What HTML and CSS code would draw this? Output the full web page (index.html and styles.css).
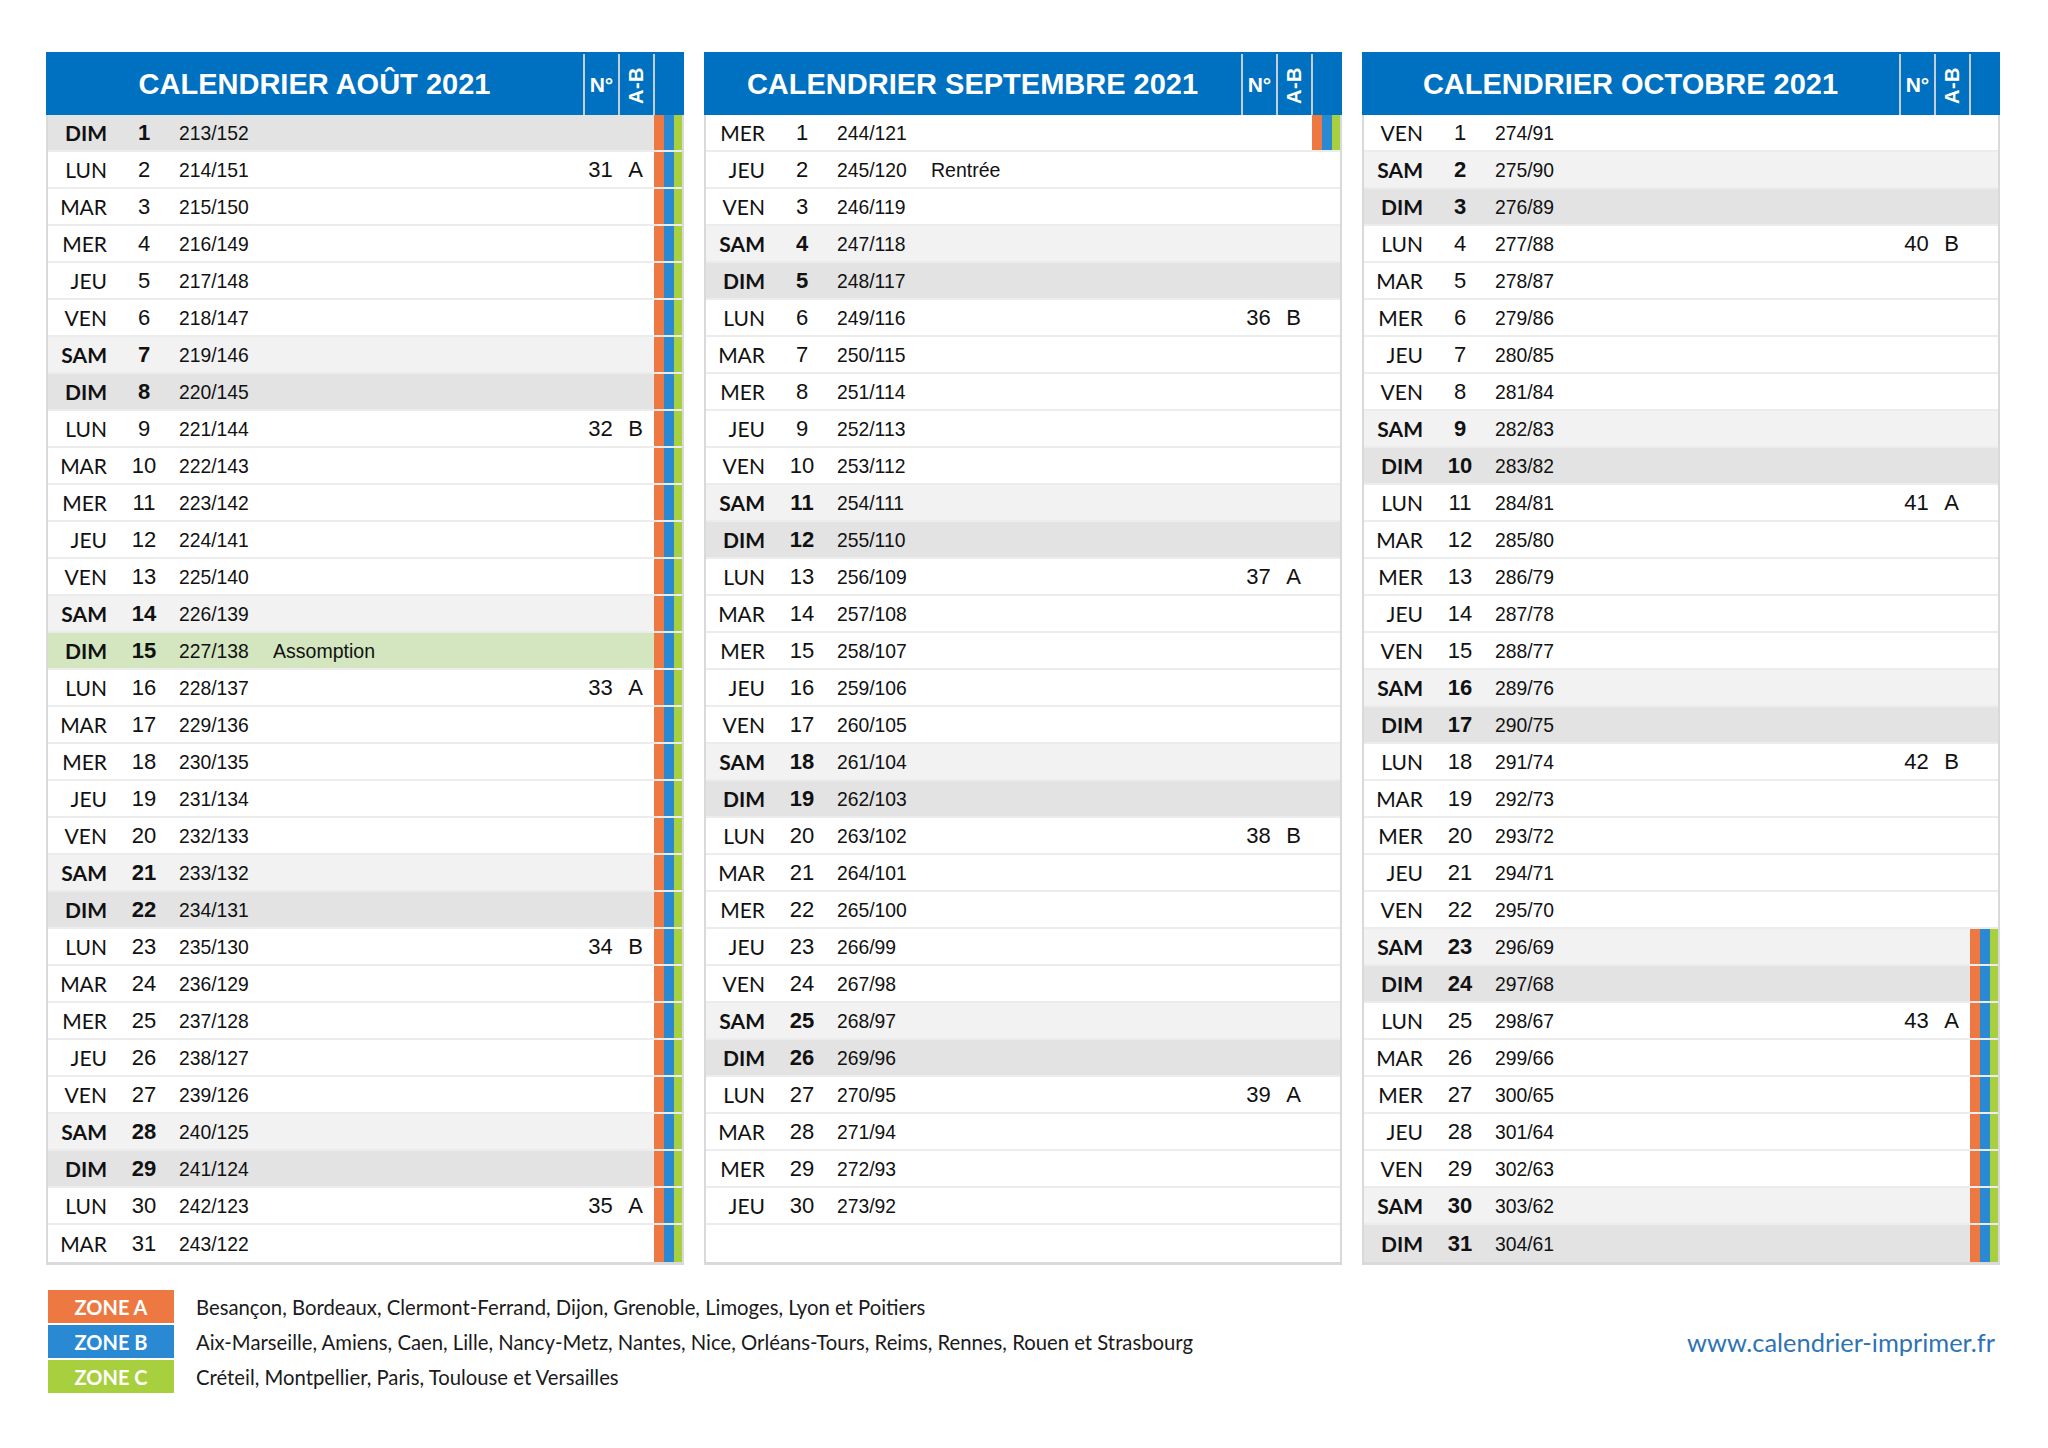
FILE: index.html
```html
<!DOCTYPE html>
<html lang="fr">
<head>
<meta charset="utf-8">
<title>Calendrier août – octobre 2021</title>
<link rel="stylesheet" href="styles.css">
</head>
<body>
<div class="page">
  <div class="months">
    <section class="month">
      <div class="head"><div class="title">CALENDRIER AOÛT 2021</div><div class="hn">N°</div><div class="hab"><span>A-B</span></div><div class="hs"></div></div>
      <div class="body">
        <div class="row dim v"><span class="d">DIM</span><span class="n">1</span><span class="y">213/152</span><span class="s"></span></div>
        <div class="row v"><span class="d">LUN</span><span class="n">2</span><span class="y">214/151</span><span class="w">31</span><span class="z">A</span><span class="s"></span></div>
        <div class="row v"><span class="d">MAR</span><span class="n">3</span><span class="y">215/150</span><span class="s"></span></div>
        <div class="row v"><span class="d">MER</span><span class="n">4</span><span class="y">216/149</span><span class="s"></span></div>
        <div class="row v"><span class="d">JEU</span><span class="n">5</span><span class="y">217/148</span><span class="s"></span></div>
        <div class="row v"><span class="d">VEN</span><span class="n">6</span><span class="y">218/147</span><span class="s"></span></div>
        <div class="row sam v"><span class="d">SAM</span><span class="n">7</span><span class="y">219/146</span><span class="s"></span></div>
        <div class="row dim v"><span class="d">DIM</span><span class="n">8</span><span class="y">220/145</span><span class="s"></span></div>
        <div class="row v"><span class="d">LUN</span><span class="n">9</span><span class="y">221/144</span><span class="w">32</span><span class="z">B</span><span class="s"></span></div>
        <div class="row v"><span class="d">MAR</span><span class="n">10</span><span class="y">222/143</span><span class="s"></span></div>
        <div class="row v"><span class="d">MER</span><span class="n">11</span><span class="y">223/142</span><span class="s"></span></div>
        <div class="row v"><span class="d">JEU</span><span class="n">12</span><span class="y">224/141</span><span class="s"></span></div>
        <div class="row v"><span class="d">VEN</span><span class="n">13</span><span class="y">225/140</span><span class="s"></span></div>
        <div class="row sam v"><span class="d">SAM</span><span class="n">14</span><span class="y">226/139</span><span class="s"></span></div>
        <div class="row dim fer v"><span class="d">DIM</span><span class="n">15</span><span class="y">227/138</span><span class="h">Assomption</span><span class="s"></span></div>
        <div class="row v"><span class="d">LUN</span><span class="n">16</span><span class="y">228/137</span><span class="w">33</span><span class="z">A</span><span class="s"></span></div>
        <div class="row v"><span class="d">MAR</span><span class="n">17</span><span class="y">229/136</span><span class="s"></span></div>
        <div class="row v"><span class="d">MER</span><span class="n">18</span><span class="y">230/135</span><span class="s"></span></div>
        <div class="row v"><span class="d">JEU</span><span class="n">19</span><span class="y">231/134</span><span class="s"></span></div>
        <div class="row v"><span class="d">VEN</span><span class="n">20</span><span class="y">232/133</span><span class="s"></span></div>
        <div class="row sam v"><span class="d">SAM</span><span class="n">21</span><span class="y">233/132</span><span class="s"></span></div>
        <div class="row dim v"><span class="d">DIM</span><span class="n">22</span><span class="y">234/131</span><span class="s"></span></div>
        <div class="row v"><span class="d">LUN</span><span class="n">23</span><span class="y">235/130</span><span class="w">34</span><span class="z">B</span><span class="s"></span></div>
        <div class="row v"><span class="d">MAR</span><span class="n">24</span><span class="y">236/129</span><span class="s"></span></div>
        <div class="row v"><span class="d">MER</span><span class="n">25</span><span class="y">237/128</span><span class="s"></span></div>
        <div class="row v"><span class="d">JEU</span><span class="n">26</span><span class="y">238/127</span><span class="s"></span></div>
        <div class="row v"><span class="d">VEN</span><span class="n">27</span><span class="y">239/126</span><span class="s"></span></div>
        <div class="row sam v"><span class="d">SAM</span><span class="n">28</span><span class="y">240/125</span><span class="s"></span></div>
        <div class="row dim v"><span class="d">DIM</span><span class="n">29</span><span class="y">241/124</span><span class="s"></span></div>
        <div class="row v"><span class="d">LUN</span><span class="n">30</span><span class="y">242/123</span><span class="w">35</span><span class="z">A</span><span class="s"></span></div>
        <div class="row v"><span class="d">MAR</span><span class="n">31</span><span class="y">243/122</span><span class="s"></span></div>
      </div>
    </section>

    <section class="month">
      <div class="head"><div class="title">CALENDRIER SEPTEMBRE 2021</div><div class="hn">N°</div><div class="hab"><span>A-B</span></div><div class="hs"></div></div>
      <div class="body">
        <div class="row v"><span class="d">MER</span><span class="n">1</span><span class="y">244/121</span><span class="s"></span></div>
        <div class="row"><span class="d">JEU</span><span class="n">2</span><span class="y">245/120</span><span class="h">Rentrée</span></div>
        <div class="row"><span class="d">VEN</span><span class="n">3</span><span class="y">246/119</span></div>
        <div class="row sam"><span class="d">SAM</span><span class="n">4</span><span class="y">247/118</span></div>
        <div class="row dim"><span class="d">DIM</span><span class="n">5</span><span class="y">248/117</span></div>
        <div class="row"><span class="d">LUN</span><span class="n">6</span><span class="y">249/116</span><span class="w">36</span><span class="z">B</span></div>
        <div class="row"><span class="d">MAR</span><span class="n">7</span><span class="y">250/115</span></div>
        <div class="row"><span class="d">MER</span><span class="n">8</span><span class="y">251/114</span></div>
        <div class="row"><span class="d">JEU</span><span class="n">9</span><span class="y">252/113</span></div>
        <div class="row"><span class="d">VEN</span><span class="n">10</span><span class="y">253/112</span></div>
        <div class="row sam"><span class="d">SAM</span><span class="n">11</span><span class="y">254/111</span></div>
        <div class="row dim"><span class="d">DIM</span><span class="n">12</span><span class="y">255/110</span></div>
        <div class="row"><span class="d">LUN</span><span class="n">13</span><span class="y">256/109</span><span class="w">37</span><span class="z">A</span></div>
        <div class="row"><span class="d">MAR</span><span class="n">14</span><span class="y">257/108</span></div>
        <div class="row"><span class="d">MER</span><span class="n">15</span><span class="y">258/107</span></div>
        <div class="row"><span class="d">JEU</span><span class="n">16</span><span class="y">259/106</span></div>
        <div class="row"><span class="d">VEN</span><span class="n">17</span><span class="y">260/105</span></div>
        <div class="row sam"><span class="d">SAM</span><span class="n">18</span><span class="y">261/104</span></div>
        <div class="row dim"><span class="d">DIM</span><span class="n">19</span><span class="y">262/103</span></div>
        <div class="row"><span class="d">LUN</span><span class="n">20</span><span class="y">263/102</span><span class="w">38</span><span class="z">B</span></div>
        <div class="row"><span class="d">MAR</span><span class="n">21</span><span class="y">264/101</span></div>
        <div class="row"><span class="d">MER</span><span class="n">22</span><span class="y">265/100</span></div>
        <div class="row"><span class="d">JEU</span><span class="n">23</span><span class="y">266/99</span></div>
        <div class="row"><span class="d">VEN</span><span class="n">24</span><span class="y">267/98</span></div>
        <div class="row sam"><span class="d">SAM</span><span class="n">25</span><span class="y">268/97</span></div>
        <div class="row dim"><span class="d">DIM</span><span class="n">26</span><span class="y">269/96</span></div>
        <div class="row"><span class="d">LUN</span><span class="n">27</span><span class="y">270/95</span><span class="w">39</span><span class="z">A</span></div>
        <div class="row"><span class="d">MAR</span><span class="n">28</span><span class="y">271/94</span></div>
        <div class="row"><span class="d">MER</span><span class="n">29</span><span class="y">272/93</span></div>
        <div class="row"><span class="d">JEU</span><span class="n">30</span><span class="y">273/92</span></div>
        <div class="row"></div>
      </div>
    </section>

    <section class="month">
      <div class="head"><div class="title">CALENDRIER OCTOBRE 2021</div><div class="hn">N°</div><div class="hab"><span>A-B</span></div><div class="hs"></div></div>
      <div class="body">
        <div class="row"><span class="d">VEN</span><span class="n">1</span><span class="y">274/91</span></div>
        <div class="row sam"><span class="d">SAM</span><span class="n">2</span><span class="y">275/90</span></div>
        <div class="row dim"><span class="d">DIM</span><span class="n">3</span><span class="y">276/89</span></div>
        <div class="row"><span class="d">LUN</span><span class="n">4</span><span class="y">277/88</span><span class="w">40</span><span class="z">B</span></div>
        <div class="row"><span class="d">MAR</span><span class="n">5</span><span class="y">278/87</span></div>
        <div class="row"><span class="d">MER</span><span class="n">6</span><span class="y">279/86</span></div>
        <div class="row"><span class="d">JEU</span><span class="n">7</span><span class="y">280/85</span></div>
        <div class="row"><span class="d">VEN</span><span class="n">8</span><span class="y">281/84</span></div>
        <div class="row sam"><span class="d">SAM</span><span class="n">9</span><span class="y">282/83</span></div>
        <div class="row dim"><span class="d">DIM</span><span class="n">10</span><span class="y">283/82</span></div>
        <div class="row"><span class="d">LUN</span><span class="n">11</span><span class="y">284/81</span><span class="w">41</span><span class="z">A</span></div>
        <div class="row"><span class="d">MAR</span><span class="n">12</span><span class="y">285/80</span></div>
        <div class="row"><span class="d">MER</span><span class="n">13</span><span class="y">286/79</span></div>
        <div class="row"><span class="d">JEU</span><span class="n">14</span><span class="y">287/78</span></div>
        <div class="row"><span class="d">VEN</span><span class="n">15</span><span class="y">288/77</span></div>
        <div class="row sam"><span class="d">SAM</span><span class="n">16</span><span class="y">289/76</span></div>
        <div class="row dim"><span class="d">DIM</span><span class="n">17</span><span class="y">290/75</span></div>
        <div class="row"><span class="d">LUN</span><span class="n">18</span><span class="y">291/74</span><span class="w">42</span><span class="z">B</span></div>
        <div class="row"><span class="d">MAR</span><span class="n">19</span><span class="y">292/73</span></div>
        <div class="row"><span class="d">MER</span><span class="n">20</span><span class="y">293/72</span></div>
        <div class="row"><span class="d">JEU</span><span class="n">21</span><span class="y">294/71</span></div>
        <div class="row"><span class="d">VEN</span><span class="n">22</span><span class="y">295/70</span></div>
        <div class="row sam v"><span class="d">SAM</span><span class="n">23</span><span class="y">296/69</span><span class="s"></span></div>
        <div class="row dim v"><span class="d">DIM</span><span class="n">24</span><span class="y">297/68</span><span class="s"></span></div>
        <div class="row v"><span class="d">LUN</span><span class="n">25</span><span class="y">298/67</span><span class="w">43</span><span class="z">A</span><span class="s"></span></div>
        <div class="row v"><span class="d">MAR</span><span class="n">26</span><span class="y">299/66</span><span class="s"></span></div>
        <div class="row v"><span class="d">MER</span><span class="n">27</span><span class="y">300/65</span><span class="s"></span></div>
        <div class="row v"><span class="d">JEU</span><span class="n">28</span><span class="y">301/64</span><span class="s"></span></div>
        <div class="row v"><span class="d">VEN</span><span class="n">29</span><span class="y">302/63</span><span class="s"></span></div>
        <div class="row sam v"><span class="d">SAM</span><span class="n">30</span><span class="y">303/62</span><span class="s"></span></div>
        <div class="row dim v"><span class="d">DIM</span><span class="n">31</span><span class="y">304/61</span><span class="s"></span></div>
      </div>
    </section>
  </div>

  <footer class="legend">
    <div class="zones">
      <div class="zone"><span class="tag za">ZONE A</span><span class="cities">Besançon, Bordeaux, Clermont-Ferrand, Dijon, Grenoble, Limoges, Lyon et Poitiers</span></div>
      <div class="zone"><span class="tag zb">ZONE B</span><span class="cities">Aix-Marseille, Amiens, Caen, Lille, Nancy-Metz, Nantes, Nice, Orléans-Tours, Reims, Rennes, Rouen et Strasbourg</span></div>
      <div class="zone"><span class="tag zc">ZONE C</span><span class="cities">Créteil, Montpellier, Paris, Toulouse et Versailles</span></div>
    </div>
    <div class="url">www.calendrier-imprimer.fr</div>
  </footer>
</div>
</body>
</html>
```

FILE: styles.css
```css
html, body {
  margin: 0;
  padding: 0;
  background: #ffffff;
}

.page {
  width: 2048px;
  padding: 52px 0 0 46px;
  box-sizing: border-box;
  color: #111111;
}

.months {
  display: flex;
  gap: 20px;
}

.month {
  width: 638px;
}

/* ---------- header ---------- */
.head {
  display: grid;
  grid-template-columns: 537px 35px 35px 31px;
  height: 63px;
  background: #0070c0;
  color: #ffffff;
  font-family: "Liberation Sans", Arial, sans-serif;
  font-weight: 700;
}

.title {
  display: flex;
  align-items: center;
  justify-content: center;
  font-size: 29px;
  padding-top: 2px;
}

.hn, .hab, .hs {
  border-left: 2px solid #c5cdd6;
  margin-top: 2px;
}

.hn {
  display: flex;
  align-items: center;
  justify-content: center;
  font-size: 21px;
}

.hab {
  display: flex;
  align-items: center;
  justify-content: center;
  padding-top: 2px;
}

.hab span {
  writing-mode: vertical-rl;
  transform: rotate(180deg);
  font-size: 20px;
  letter-spacing: 0.5px;
}

/* ---------- body ---------- */
.body {
  border: 2px solid #d9d9d9;
  border-top: 0;
  border-bottom-width: 3px;
}

.row {
  display: grid;
  grid-template-columns: 70px 52px 103px 310px 35px 35px 29px;
  height: 37px;
  box-sizing: border-box;
  border-bottom: 2px solid #ececec;
  align-items: center;
  font-family: "Liberation Sans", Arial, sans-serif;
  font-size: 22px;
}

.row:last-child {
  border-bottom: 0;
}

.row.sam { background: #f2f2f2; }
.row.dim { background: #e3e3e3; }
.row.fer { background: #d3e6bf; }

.d {
  grid-column: 1;
  text-align: right;
  padding-right: 11px;
  font-family: Lato, "Open Sans", sans-serif;
  font-size: 21px;
}

.n {
  grid-column: 2;
  text-align: center;
}

.sam .d, .dim .d, .sam .n, .dim .n {
  font-weight: 700;
}

.y {
  grid-column: 3;
  justify-self: start;
  margin-left: 9px;
  font-size: 21px;
  transform: scaleX(0.92);
  transform-origin: left center;
}

.h {
  grid-column: 4;
  justify-self: start;
  font-size: 21px;
  transform: scaleX(0.93);
  transform-origin: left center;
}

.w {
  grid-column: 5;
  text-align: center;
}

.z {
  grid-column: 6;
  text-align: center;
}

.s {
  grid-column: 7;
  align-self: stretch;
  background: linear-gradient(to right,
    transparent 0 1px,
    #ed7842 1px 11px,
    #2989d3 11px 21px,
    #a8cf3d 21px 29px);
}

/* ---------- legend ---------- */
.legend {
  display: flex;
  justify-content: space-between;
  align-items: center;
  width: 1949px;
  margin-top: 25px;
  padding-left: 2px;
  box-sizing: border-box;
}

.zones {
  display: flex;
  flex-direction: column;
  gap: 2px;
}

.zone {
  display: flex;
  align-items: center;
  gap: 22px;
}

.tag {
  width: 126px;
  height: 33px;
  display: flex;
  align-items: center;
  justify-content: center;
  color: #ffffff;
  font-family: Lato, "Open Sans", sans-serif;
  font-weight: 700;
  font-size: 20px;
}

.za { background: #ed7842; }
.zb { background: #2989d3; }
.zc { background: #a8cf3d; }

.cities {
  font-family: Lato, "Open Sans", sans-serif;
  font-size: 20.3px;
  color: #1a1a1a;
}

.url {
  font-family: Lato, "Open Sans", sans-serif;
  font-size: 25.4px;
  color: #2e74b5;
}
```
